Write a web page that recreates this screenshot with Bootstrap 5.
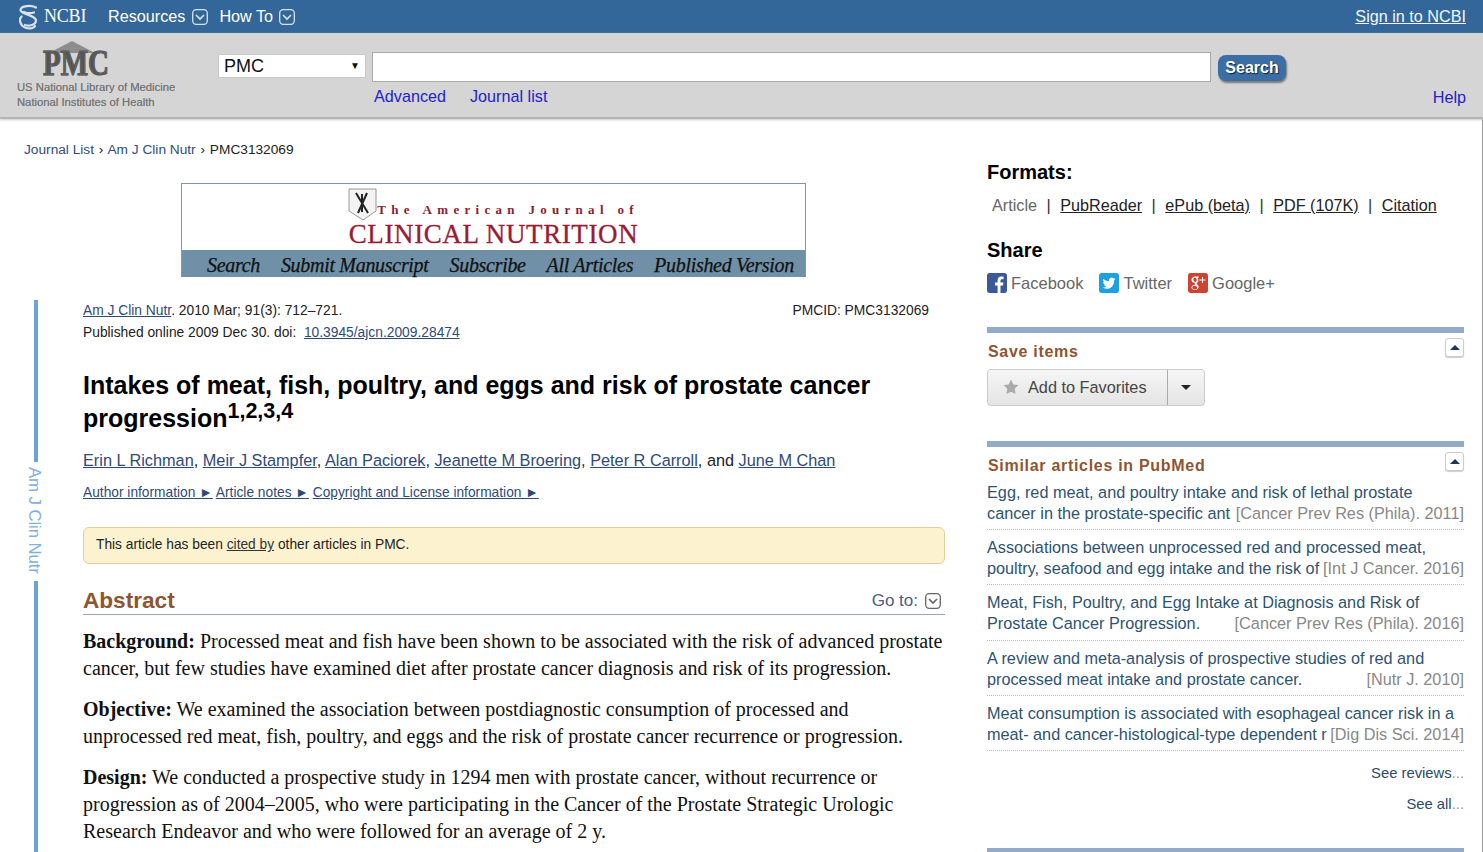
<!DOCTYPE html>
<html lang="en">
<head>
<meta charset="utf-8">
<title>PMC article</title>
<link href="https://cdn.jsdelivr.net/npm/bootstrap@5.3.0/dist/css/bootstrap.min.css" rel="stylesheet">
<style>
html,body{height:852px;overflow:hidden}
body{font-family:"Liberation Sans",Arial,sans-serif;font-size:13.8px;color:#000;background:#fff;line-height:1.5}
a{color:#2f4a7a}
.ncbi-bar{height:33px;background:#336699;padding:0 17px 0 18px;color:#fff;font-size:16.2px}
.ncbi-bar a{color:#fff;text-decoration:none}
.ncbi-bar a.signin{text-decoration:underline;color:#f2f6fb}
.ncbi-logo{font-family:"Liberation Serif",serif;font-size:18px;width:90px;letter-spacing:-.2px;color:#d8e3ee;gap:5px}
.drop-ico{margin-left:7px;margin-right:11px}
.drop-ico.tight{margin-left:6px}
.search-band{height:86px;background:#d5d5d5;border-bottom:2px solid #b4b4b4;box-shadow:0 1px 2px #ccc;padding:0 17px}
.lib-block{width:201px;padding-top:6px;color:#777;font-size:11.25px;line-height:15px;text-shadow:0 0 .5px #888}
.pmc-mark{height:41px;padding-left:24px}
.pmc-word{font-family:"Liberation Serif",serif;font-weight:700;font-size:29px;stroke:#555;stroke-width:.8px}
.search-area{padding-top:19px;font-size:16px}
.db-select{width:148px;height:24px;background:#fff;border:1px solid #c8c8c8;padding:0 5px;font-size:18px;line-height:22px;margin-right:6px;margin-top:2px;color:#111}
.db-arrow{font-size:10px}
.term-input{width:839px;height:30px;border:1px solid #aaa;background:#fff}
.go-btn{width:68px;height:26px;margin:3px 0 0 7px;background:#3c6ea6;border-radius:8px;color:#fff;font-weight:700;font-size:16px;line-height:26px;text-align:center;text-shadow:1px 1px 1px #123;box-shadow:1px 2px 2px #777}
.sub-links{padding:2px 0 0 156px;gap:24px}
.sub-links a,.help-link{color:#2222cc;text-decoration:none;font-size:16.2px}
.help-link{position:absolute;right:0;top:52px}
.page-row{border-right:1px solid #999;height:733px}
.left-pane{width:987px;flex:none;padding-left:24px}
.crumbs{padding-top:21px;height:64px;color:#222;font-size:13.7px}
.crumbs a{text-decoration:none;color:#2d4d80}
.crumb-sep{margin:0 1px}
.banner{width:625px;height:94px;margin-left:157px;border:1px solid #7f97a8;border-bottom:0;background:#fff}
.banner-top{height:66px;padding-top:4px}
.banner-line1{font-family:"Liberation Serif",serif;font-weight:700;font-size:13px;letter-spacing:5.3px;color:#8a1d32;line-height:14px;padding-top:15px;white-space:nowrap}
.banner-line2{font-family:"Liberation Serif",serif;font-size:27px;letter-spacing:.6px;line-height:25px;color:#9a1b35;text-align:center;-webkit-text-stroke:.3px #9a1b35;margin-top:1px}
.banner-nav{height:27px;background:#6f90a6;font-family:"Liberation Serif",serif;font-style:italic;font-size:20px;line-height:24px;padding:3px 11px 0 25px;color:#111;letter-spacing:-.3px;-webkit-text-stroke:.25px #111}
.article-wrap{padding-top:23px;height:575px}
.rail{width:59px;flex:none;padding-left:1px;color:#7fb0de}
.rail-seg{width:4px;background:#6fa3d8;margin-left:9px}
.rail-seg.upper{height:162px}
.rail-text{writing-mode:vertical-rl;font-size:16.8px;line-height:18px;width:18px;padding:5px 0 7px;letter-spacing:-.1px}
.art-body{width:862px}
.cite-line{line-height:22px;color:#222}
.art-title{font-size:25px;font-weight:700;line-height:33px;margin:25px 0 0;color:#000}
.art-title sup{font-size:21.5px;top:-.42em}
.authors{font-size:16.3px;margin-top:13px;line-height:24px;color:#222}
.info-links{margin-top:10px;line-height:22px;font-size:13.75px}
.cited-box{height:37px;margin-top:23px;background:#fdf2cf;border:1px solid #e6cda0;border-radius:6px;padding:6px 12px;line-height:21px;color:#222;font-size:13.75px}
.cited-box a{color:#333}
.abs-head{margin-top:19px;height:32px;border-bottom:1px solid #97a8ba}
.abs-title{font-size:22.6px;font-weight:700;color:#8f5530;line-height:36px;margin:0}
.goto{color:#4c5a86;font-size:17px;line-height:28px;gap:7px;padding-right:4px;align-self:flex-start;margin-top:4px}
.abs-body{font-family:"Liberation Serif",serif;font-size:20px;line-height:27px;padding-top:13px;color:#111}
.abs-body p{margin:0 0 14px}
.right-pane{width:477px;padding-top:39px;flex:none}
.side-head{font-size:20px;font-weight:700;line-height:28px;margin:0}
.side-head.gap-top{margin-top:19px}
.format-row{font-size:16.2px;padding:7px 0 0 5px;line-height:24px;color:#333}
.format-row a{color:#222}
.format-row .now{color:#666}
.format-row .pipe{margin:0 9.5px}
.share-row{font-size:16.5px;color:#666;line-height:20px;margin-top:9px;gap:16px}
.share-row a{color:#666;text-decoration:none;gap:4px}
.share-ico{width:20px;height:20px;border-radius:2px;display:block}
.portlet{border-top:6px solid #92acc7;position:relative}
.portlet.save{margin-top:34px;height:114px}
.portlet.similar{height:407px}
.port-title{font-size:16px;font-weight:700;color:#8f5530;letter-spacing:.7px;line-height:24px;margin:0;padding:7px 0 0 1px}
.collapse-btn{position:absolute;right:0;top:5px;width:19px;height:19px;border:1px solid #ccc;border-radius:3px;background:#fff;box-shadow:0 1px 1px #ccc}
.collapse-btn::after{content:"";position:absolute;left:4px;top:6px;border:5px solid transparent;border-top:0;border-bottom-color:#1d3560}
.fav-group{width:218px;height:37px;margin-top:5px;border:1px solid #ccc;border-radius:4px;background:linear-gradient(#f6f6f6,#e4e4e4);font-size:16.3px;color:#444}
.fav-main{width:180px;border-right:1px solid #aaa;padding-left:15px;gap:9px;line-height:35px}
.fav-caret{flex:1}
.fav-caret::after{content:"";border:5px solid transparent;border-bottom:0;border-top-color:#222}
.sim-row{height:55.25px;border-bottom:1px dotted #bbb;font-size:16.25px;line-height:21px;padding-top:7px}
.sim-row.first{height:52px;padding-top:4px}
.sim-row a{color:#2d5373;text-decoration:none}
.sim-line{white-space:nowrap;display:flex;justify-content:space-between}
.sim-line .jrn{color:#888}
.more-link{text-align:right;font-size:14.8px;line-height:20px;color:#2c4a6a}
.more-link.gap-a{margin-top:12px}
.more-link.gap-b{margin-top:11px}
.more-link span{color:#999}
</style>
</head>
<body>
<div class="ncbi-bar d-flex align-items-center">
  <a href="#" class="ncbi-logo d-flex align-items-center">
    <svg width="21" height="26" viewBox="0 0 21 26" fill="none" stroke="#d8e3ee" stroke-width="2.2" stroke-linecap="round"><path d="M18 3.500C13 1 3 1.500 2.500 6c-.4 4 15.500 5 15.500 10.500 0 4.500-7 6-11 4.500"/><path d="M3.500 12.500C1 15 1.500 21 7 23.500c5 2 9 .5 10-1.500"/><path d="M16 8.500C13 9.500 8 9.500 6 8"/></svg>
    <span>NCBI</span>
  </a>
  <a href="#">Resources</a>
  <svg class="drop-ico" width="16" height="16" viewBox="0 0 16 16" fill="none" stroke="#d8e3ee"><rect x=".7" y=".7" width="14.6" height="14.6" rx="3.5" stroke-width="1.3"/><path d="M4 6l4 4 4-4" stroke-width="1.7"/></svg>
  <a href="#">How To</a>
  <svg class="drop-ico tight" width="16" height="16" viewBox="0 0 16 16" fill="none" stroke="#d8e3ee"><rect x=".7" y=".7" width="14.6" height="14.6" rx="3.5" stroke-width="1.3"/><path d="M4 6l4 4 4-4" stroke-width="1.7"/></svg>
  <a href="#" class="signin ms-auto">Sign in to NCBI</a>
</div>
<div class="search-band d-flex">
  <div class="lib-block">
    <div class="pmc-mark">
      <svg width="90" height="41" viewBox="0 0 90 41" class="d-block"><path d="M8 14L31 2 54 14z" fill="#8d8d8d"/><text x="2" y="30" class="pmc-word" fill="#555" transform="scale(1 1.2)">PMC</text></svg>
    </div>
    <div>US National Library of Medicine</div>
    <div>National Institutes of Health</div>
  </div>
  <div class="search-area flex-grow-1 position-relative">
    <div class="d-flex">
      <div class="db-select d-flex justify-content-between align-items-center"><span>PMC</span><span class="db-arrow">&#9660;</span></div>
      <div class="term-input"></div>
      <div class="go-btn">Search</div>
    </div>
    <div class="sub-links d-flex">
      <a href="#">Advanced</a><a href="#">Journal list</a>
    </div>
    <a href="#" class="help-link">Help</a>
  </div>
</div>
<div class="page-row d-flex">
  <div class="left-pane">
    <div class="crumbs"><a href="#">Journal List</a> <span class="crumb-sep">›</span> <a href="#">Am J Clin Nutr</a> <span class="crumb-sep">›</span> PMC3132069</div>
    <div class="banner">
      <div class="banner-top d-flex flex-column align-items-center">
        <div class="d-flex">
          <svg width="29" height="33" viewBox="0 0 29 33" fill="none" stroke="#222"><path d="M1 1h27v22l-13 9-14-9z" fill="#f3f3f3" stroke="#999"/><path d="M8 5l12 20M19 5L10 25M14 6v18" stroke-width="2"/></svg>
          <div class="banner-line1">The American Journal of</div>
        </div>
        <div class="banner-line2">CLINICAL NUTRITION</div>
      </div>
      <div class="banner-nav d-flex justify-content-between"><span>Search</span><span>Submit Manuscript</span><span>Subscribe</span><span>All Articles</span><span>Published Version</span></div>
    </div>
    <div class="article-wrap d-flex">
      <div class="rail d-flex flex-column">
        <div class="rail-seg upper"></div>
        <div class="rail-text">Am J Clin Nutr</div>
        <div class="rail-seg flex-grow-1"></div>
      </div>
      <div class="art-body">
        <div class="cite-line d-flex justify-content-between pe-3"><span><a href="#">Am J Clin Nutr</a>. 2010 Mar; 91(3): 712–721.</span><span>PMCID: PMC3132069</span></div>
        <div class="cite-line">Published online 2009 Dec 30. doi: &nbsp;<a href="#">10.3945/ajcn.2009.28474</a></div>
        <h1 class="art-title">Intakes of meat, fish, poultry, and eggs and risk of prostate cancer progression<sup>1,2,3,4</sup></h1>
        <div class="authors"><a href="#">Erin L Richman</a>, <a href="#">Meir J Stampfer</a>, <a href="#">Alan Paciorek</a>, <a href="#">Jeanette M Broering</a>, <a href="#">Peter R Carroll</a>, and <a href="#">June M Chan</a></div>
        <div class="info-links"><a href="#">Author information ►</a> <a href="#">Article notes ►</a> <a href="#">Copyright and License information ►</a></div>
        <div class="cited-box">This article has been <a href="#">cited by</a> other articles in PMC.</div>
        <div class="abs-head d-flex justify-content-between">
          <h2 class="abs-title">Abstract</h2>
          <span class="goto d-flex align-items-center">Go to:
            <svg width="16" height="16" viewBox="0 0 16 16" fill="none" stroke="#666"><rect x=".7" y=".7" width="14.6" height="14.6" rx="3.5" stroke-width="1.3"/><path d="M4 6l4 4 4-4" stroke-width="1.7"/></svg>
          </span>
        </div>
        <div class="abs-body">
          <p><b>Background:</b> Processed meat and fish have been shown to be associated with the risk of advanced prostate cancer, but few studies have examined diet after prostate cancer diagnosis and risk of its progression.</p>
          <p><b>Objective:</b> We examined the association between postdiagnostic consumption of processed and unprocessed red meat, fish, poultry, and eggs and the risk of prostate cancer recurrence or progression.</p>
          <p><b>Design:</b> We conducted a prospective study in 1294 men with prostate cancer, without recurrence or progression as of 2004–2005, who were participating in the Cancer of the Prostate Strategic Urologic Research Endeavor and who were followed for an average of 2 y.</p>
        </div>
      </div>
    </div>
  </div>
  <div class="right-pane">
    <h3 class="side-head">Formats:</h3>
    <div class="format-row d-flex"><span class="now">Article</span><span class="pipe">|</span><a href="#">PubReader</a><span class="pipe">|</span><a href="#">ePub (beta)</a><span class="pipe">|</span><a href="#">PDF (107K)</a><span class="pipe">|</span><a href="#">Citation</a></div>
    <h3 class="side-head gap-top">Share</h3>
    <div class="share-row d-flex">
      <a href="#" class="d-flex"><svg class="share-ico" viewBox="0 0 20 20"><rect width="20" height="20" rx="2" fill="#3b5998"/><path d="M13.5 20v-7.500H16l.4-3h-2.900V7.700c0-.9.3-1.400 1.500-1.400h1.500V3.600c-.3 0-1.200-.1-2.200-.1-2.200 0-3.700 1.300-3.700 3.800v2.200H8v3h2.600V20z" fill="#fff"/></svg>Facebook</a>
      <a href="#" class="d-flex"><svg class="share-ico" viewBox="0 0 20 20"><rect width="20" height="20" rx="2" fill="#1da1e2"/><path d="M16.500 6c-.5.2-1 .4-1.500.4.500-.3 1-.8 1.200-1.400-.5.3-1.100.5-1.700.6a2.600 2.600 0 0 0-4.500 2.400C7.700 8.400 5.800 7.400 4.500 5.800c-.7 1.200-.3 2.700.8 3.500-.4 0-.8-.1-1.200-.3 0 1.300.9 2.400 2.100 2.600-.4.100-.8.100-1.200 0 .3 1 1.300 1.800 2.500 1.800-1.100.9-2.500 1.200-3.900 1.100 3.300 2.100 7.200 1.600 9.300-.7 1.700-1.800 2.300-4.100 2.200-6.300.5-.4 1-.9 1.400-1.500z" fill="#fff"/></svg>Twitter</a>
      <a href="#" class="d-flex"><svg class="share-ico" viewBox="0 0 20 20"><rect width="20" height="20" rx="2" fill="#cf4332"/><path d="M10.500 3.500H7.200C5.200 3.500 3.500 5 3.500 6.800c0 1.700 1.300 3 3 3h.4c-.1.300-.2.500-.2.800 0 .5.200.8.500 1.200-2 .1-3.700 1-3.700 2.700 0 1.500 1.600 2.500 3.500 2.500 2.200 0 3.700-1.500 3.700-2.900 0-2.200-2.100-2.500-2.100-3.500 0-.8 1.800-1.300 1.800-3.400 0-1-.5-1.800-1-2.300h1.100zM6.800 4.500c1 0 1.700 1 1.900 2.200.1 1.100-.4 2.200-1.400 2.200-1 0-1.800-1-2-2.200-.1-1.200.5-2.200 1.500-2.200zM6.600 12.700c1.300 0 2.500.9 2.500 2 0 1-.9 1.800-2.200 1.800-1.500 0-2.700-.8-2.700-1.900 0-1.100 1.100-1.900 2.400-1.900zM14 4v2.500h-2.500v1H14V10h1V7.500h2.500v-1H15V4z" fill="#fff"/></svg>Google+</a>
    </div>
    <div class="portlet save">
      <h4 class="port-title">Save items</h4>
      <span class="collapse-btn"></span>
      <div class="fav-group d-flex">
        <div class="fav-main d-flex"><svg width="16" height="35" viewBox="0 0 16 35"><path d="M8 9.500l2.300 4.900 5.200.7-3.800 3.700.9 5.300L8 21.700l-4.600 2.400.9-5.300L.5 15.100l5.200-.7z" fill="#aaa"/></svg><span>Add to Favorites</span></div>
        <div class="fav-caret d-flex align-items-center justify-content-center"></div>
      </div>
    </div>
    <div class="portlet similar">
      <h4 class="port-title">Similar articles in PubMed</h4>
      <span class="collapse-btn"></span>
      <div class="sim-row first"><a href="#"><div class="sim-line">Egg, red meat, and poultry intake and risk of lethal prostate</div><div class="sim-line"><span>cancer in the prostate-specific ant</span><span class="jrn">[Cancer Prev Res (Phila). 2011]</span></div></a></div>
      <div class="sim-row"><a href="#"><div class="sim-line">Associations between unprocessed red and processed meat,</div><div class="sim-line"><span>poultry, seafood and egg intake and the risk of</span><span class="jrn">[Int J Cancer. 2016]</span></div></a></div>
      <div class="sim-row"><a href="#"><div class="sim-line">Meat, Fish, Poultry, and Egg Intake at Diagnosis and Risk of</div><div class="sim-line"><span>Prostate Cancer Progression.</span><span class="jrn">[Cancer Prev Res (Phila). 2016]</span></div></a></div>
      <div class="sim-row"><a href="#"><div class="sim-line">A review and meta-analysis of prospective studies of red and</div><div class="sim-line"><span>processed meat intake and prostate cancer.</span><span class="jrn">[Nutr J. 2010]</span></div></a></div>
      <div class="sim-row"><a href="#"><div class="sim-line">Meat consumption is associated with esophageal cancer risk in a</div><div class="sim-line"><span>meat- and cancer-histological-type dependent r</span><span class="jrn">[Dig Dis Sci. 2014]</span></div></a></div>
      <div class="more-link gap-a">See reviews<span>...</span></div>
      <div class="more-link gap-b">See all<span>...</span></div>
    </div>
    <div class="portlet"></div>
  </div>
</div>
</body>
</html>
